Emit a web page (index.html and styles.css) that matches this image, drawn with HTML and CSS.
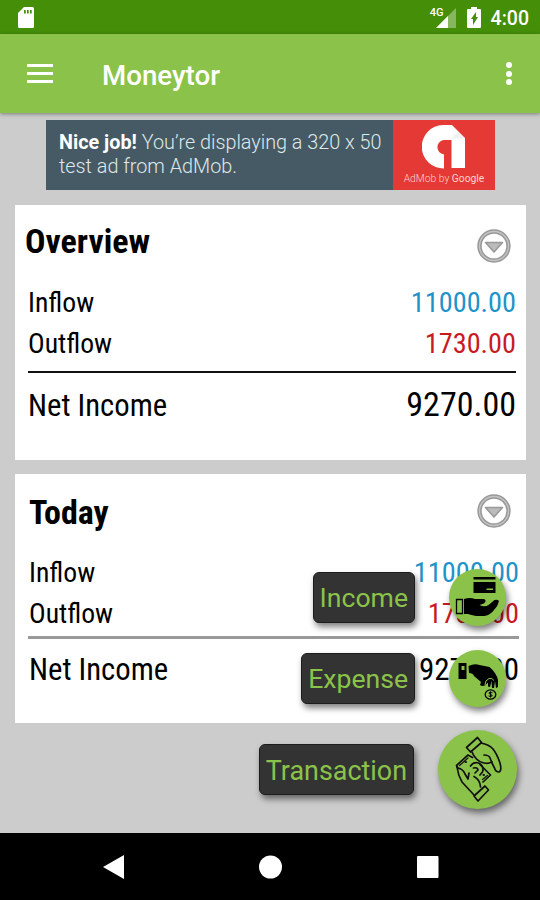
FILE: index.html
```html
<!DOCTYPE html>
<html lang="en">
<head>
  <meta charset="UTF-8">
  <meta name="viewport" content="width=device-width, initial-scale=1.0">
  <title>Moneytor</title>
  <link rel="stylesheet" href="styles.css">
</head>
<body>
  <div class="phone">
    <div class="status-bar">
      <svg class="sd-icon" width="16" height="21" viewBox="0 0 16 21">
        <path fill="#fff" d="M6 0h8.500a1.500 1.500 0 0 1 1.500 1.500v18a1.500 1.500 0 0 1-1.500 1.500h-13A1.500 1.500 0 0 1 0 19.500V6z"/>
        <path fill="#458f08" d="M6 3h1.700v3.500H6zM9 3h1.700v3.500H9zM12 3h1.700v3.500H12z"/>
      </svg>
      <div class="status-right">
        <span class="network">4G</span>
        <svg class="signal-icon" width="20" height="20" viewBox="0 0 20 20">
          <path fill="#fff" opacity=".35" d="M20 0v20H0z"/>
          <path fill="#fff" d="M12 8v12H0z"/>
        </svg>
        <svg class="battery-icon" width="14" height="21" viewBox="0 0 14 21">
          <path fill="#fff" d="M4 0h6v2h3a1 1 0 0 1 1 1v17a1 1 0 0 1-1 1H1a1 1 0 0 1-1-1V3a1 1 0 0 1 1-1h3z"/>
          <path fill="#458f08" d="M9 5v5h2l-5 8v-6H4z"/>
        </svg>
        <span class="clock">4:00</span>
      </div>
    </div>

    <div class="app-bar">
      <div class="menu-button"><span></span><span></span><span></span></div>
      <div class="app-title">Moneytor</div>
      <div class="more-button"><span></span><span></span><span></span></div>
    </div>

    <div class="content">
      <div class="ad">
        <div class="ad-text"><b>Nice job!</b> You’re displaying a 320 x 50<br>test ad from AdMob.</div>
        <div class="ad-logo">
          <svg width="44" height="44" viewBox="0 0 44 44">
            <path fill="#fff" d="M22 43.500A21.700 21.700 0 0 1 21 0H30L43 13V43H29.500V15H21.500A7.300 7.300 0 0 0 15.500 23Q16 28 22 29.500z"/>
            <path fill="#ddd" d="M29 13.500h14V13L36 7z" opacity=".4"/>
          </svg>
          <span class="ad-caption">AdMob by <b>Google</b></span>
        </div>
      </div>

      <div class="card overview">
        <div class="card-header">
          <div class="card-title"><span class="narrow">Overview</span></div>
          <svg class="expand-icon" width="34" height="34" viewBox="0 0 34 34">
            <circle cx="17" cy="17" r="14.500" fill="none" stroke="#999" stroke-width="4.400"/>
            <circle cx="17" cy="17" r="14.500" fill="none" stroke="#c4c4c4" stroke-width="1.300"/>
            <path d="M8.500 13.500h17L17 23z" fill="#bbb" stroke="#999" stroke-width="1.600" stroke-linejoin="round"/>
          </svg>
        </div>
        <div class="row"><span class="narrow">Inflow</span><span class="narrow inflow">11000.00</span></div>
        <div class="row"><span class="narrow">Outflow</span><span class="narrow outflow">1730.00</span></div>
        <div class="divider"></div>
        <div class="row total"><span class="narrow">Net Income</span><span class="narrow amount">9270.00</span></div>
      </div>

      <div class="card today">
        <div class="card-header">
          <div class="card-title"><span class="narrow">Today</span></div>
          <svg class="expand-icon" width="34" height="34" viewBox="0 0 34 34">
            <circle cx="17" cy="17" r="14.500" fill="none" stroke="#999" stroke-width="4.400"/>
            <circle cx="17" cy="17" r="14.500" fill="none" stroke="#c4c4c4" stroke-width="1.300"/>
            <path d="M8.500 13.500h17L17 23z" fill="#bbb" stroke="#999" stroke-width="1.600" stroke-linejoin="round"/>
          </svg>
        </div>
        <div class="row"><span class="narrow">Inflow</span><span class="narrow inflow">11000.00</span></div>
        <div class="row"><span class="narrow">Outflow</span><span class="narrow outflow">1730.00</span></div>
        <div class="divider"></div>
        <div class="row total"><span class="narrow">Net Income</span><span class="narrow amount">9270.00</span></div>
      </div>
    </div>

    <div class="fab-menu">
      <div class="fab-row">
        <span class="fab-label">Income</span>
        <div class="fab">
          <svg width="57" height="57" viewBox="0 0 57 57">
            <path d="M24.500 8h22v2.500h-22zM24.500 13h22v11h-22z"/>
            <path d="M37.500 19.500h6.500v1.500h-6.500z" fill="#8bc34a"/>
            <path d="M7.500 30.500h6v14h-6z" fill="none" stroke="#000" stroke-width="1.300"/>
            <path d="M15 30q6-2 11 0h9q2 .5 1.500 2.500t-6 3.500q5 2.500 9 0l6-5q3-1 4.500 1-1 5-5 9-4 5.500-10 6H27q-5-1-8-2h-4z"/>
          </svg>
        </div>
      </div>
      <div class="fab-row">
        <span class="fab-label">Expense</span>
        <div class="fab">
          <svg width="57" height="57" viewBox="0 0 57 57">
            <path d="M9.500 13h8v16h-8z"/>
            <path d="M12.500 16h3v4h-3z" fill="#8bc34a"/>
            <path d="M19.500 16q6-3 11-1l10 2q7 6 8.500 13v7l-2 1-1-7-1 7h-2l-.5-7-1.500 6-2-.5v-4l-3 3q-3 1-5-.5l1-3-7-6q-1-3-5-3z"/>
            <path d="M36 35q0-5 4-6.500 3-1 5 2" fill="none" stroke="#8bc34a" stroke-width="1"/>
            <ellipse cx="41.500" cy="44.500" rx="5.300" ry="4.600" fill="none" stroke="#000" stroke-width="1.300"/>
            <path d="M43.500 42.800q-2-1.300-3.500 0 0 1.200 1.500 1.500t1.700 1.600q-1.500 1.200-3.700 0M41.500 41.500v6" fill="none" stroke="#000" stroke-width="1"/>
          </svg>
        </div>
      </div>
      <div class="fab-row main">
        <span class="fab-label">Transaction</span>
        <div class="fab">
          <svg width="79" height="79" viewBox="0 0 79 79" fill="none" stroke="#111" stroke-width="1.700" stroke-linejoin="round" stroke-linecap="round">
            <path d="M28.500 17.500 39.500 7.500l4 5L32.500 22z"/>
            <path d="M43 13q8 1.500 12 6 4 5 7 14 2 8-1 9-3.500 0-4.500-4l-3-6q-3 2-7.500 1-5-1-7.500-4-3.500-4-4.500-7"/>
            <path d="M46 25q5 0 6 3t2 4"/>
            <path d="M20 38.500 18.500 35.500 30 25 34.500 27.500M42 34.500 52.500 45 45 52"/>
            <path d="M21.500 35.500 30 28M49.500 45.500 44.500 49.500" stroke-width="1.200"/>
            <path d="M32.500 36q3-4.500 8-3 6 3 4 9l-2.500 3M35.500 38q4-1 4.500 2l-3 3"/>
            <path d="M19 37q1 8 5 15l12 13M20 38q5 1 7 6l3 5 1-6M36 46.500q6 3 6.500 10.500"/>
            <path d="M36 66 47 56l3.500 4L40 71z"/>
            <path d="M27.500 32h.5M45.500 45h.5" stroke-width="2"/>
          </svg>
        </div>
      </div>
    </div>

    <div class="nav-bar">
      <svg width="24" height="26" viewBox="0 0 24 26"><path fill="#fff" d="M22 1v24L1 13z"/></svg>
      <svg width="24" height="26" viewBox="0 0 24 26"><circle cx="11.500" cy="13" r="11.500" fill="#fff"/></svg>
      <svg width="24" height="26" viewBox="0 0 24 26"><rect x="1" y="2" width="21.500" height="22" rx="1" fill="#fff"/></svg>
    </div>
  </div>
</body>
</html>
```
FILE: styles.css
```css
* {
  box-sizing: border-box;
}
body {
  margin: 0;
  font-family: Roboto, sans-serif;
  background-color: #ccc;
  color: #000;
}
svg {
  display: block;
  flex: none;
}
.phone {
  position: relative;
  width: 540px;
  height: 900px;
  display: flex;
  flex-direction: column;
  overflow: hidden;
}
.status-bar {
  height: 34px;
  flex: none;
  display: flex;
  justify-content: space-between;
  padding: 7px 11px 0 18px;
  background-color: #458f08;
  color: #fff;
}
.status-right {
  display: flex;
}
.network {
  font-size: 11px;
  line-height: 11px;
  font-weight: 500;
  margin-right: -8px;
}
.signal-icon {
  margin-top: 1px;
}
.battery-icon {
  margin: 0 10px 0 11px;
}
.clock {
  font-size: 19.500px;
  line-height: 23px;
  font-weight: 500;
}
.app-bar {
  height: 79px;
  flex: none;
  display: flex;
  align-items: center;
  padding: 0 28px 0 27px;
  background-color: #8bc34a;
  color: #fff;
  box-shadow: 0 1px 4px rgba(0, 0, 0, 0.4);
  z-index: 1;
}
.menu-button {
  width: 26px;
  display: grid;
  gap: 5px;
}
.menu-button span {
  height: 3px;
  background-color: #fff;
}
.app-title {
  flex: 1;
  margin: 4px 0 0 49px;
  font-size: 27.700px;
  line-height: 32px;
  font-weight: 500;
}
.more-button {
  display: grid;
  gap: 2.500px;
}
.more-button span {
  width: 6px;
  height: 6px;
  border-radius: 50%;
  background-color: #fff;
}
.content {
  flex: 1;
  padding: 7px 14px 0 15px;
}
.ad {
  width: 449px;
  height: 70px;
  margin: 0 auto 15px 31px;
  display: flex;
  background-color: #455a64;
}
.ad-text {
  width: 347px;
  padding: 11px 0 0 13px;
  font-size: 19.800px;
  line-height: 24px;
  font-weight: 300;
  color: #dfe8ec;
  white-space: nowrap;
}
.ad-text b {
  color: #fff;
  font-weight: 700;
}
.ad-logo {
  flex: 1;
  display: flex;
  flex-direction: column;
  align-items: center;
  padding-top: 5px;
  background-color: #e53935;
}
.ad-caption {
  margin-top: 4px;
  font-size: 10.300px;
  line-height: 12px;
  font-weight: 300;
  color: #fbd3d0;
}
.ad-caption b {
  font-weight: 400;
}
.card {
  background-color: #fff;
  padding: 19px 10px 0 13px;
}
.overview {
  height: 255px;
  margin-bottom: 14px;
}
.today {
  height: 249px;
  padding: 21px 7px 0 14px;
}
.card-header {
  height: 61px;
  display: flex;
  justify-content: space-between;
}
.today .card-header {
  height: 60px;
}
.card-title {
  font-size: 34px;
  line-height: 35px;
  font-weight: 700;
}
.narrow {
  font-family: "Roboto Condensed", Roboto, sans-serif;
  font-stretch: 75%;
}
.overview .card-title {
  margin-left: -3px;
}
.expand-icon {
  margin: 5px 5px 0 0;
}
.today .expand-icon {
  margin: -1px 8px 0 0;
}
.row {
  height: 41px;
  display: flex;
  justify-content: space-between;
  font-size: 27.700px;
  line-height: 35px;
}
.inflow,
.outflow {
  font-size: 28.300px;
}
.inflow {
  color: #1f93c9;
}
.outflow {
  color: #c91a1f;
}
.divider {
  height: 2px;
  margin-top: 4px;
  background-color: #111;
}
.today .divider {
  height: 3px;
  margin: -1px 0 0 -1px;
  background-color: #999;
}
.total {
  font-size: 30.700px;
  line-height: 65px;
}
.today .total {
  line-height: 61px;
}
.amount {
  font-size: 34px;
  line-height: 63px;
}
.today .amount {
  font-size: 31px;
  line-height: 61px;
}
.fab-menu {
  position: absolute;
  right: 23px;
  top: 569px;
  display: grid;
  gap: 24px;
  z-index: 2;
}
.fab-row {
  display: flex;
  justify-content: flex-end;
  align-items: center;
  gap: 34px;
  padding-right: 11px;
}
.fab-row.main {
  gap: 24px;
  margin-top: -1px;
  padding-right: 0;
}
.fab-label {
  height: 51px;
  padding: 0 6px;
  font-size: 26.600px;
  line-height: 49px;
  color: #8bc34a;
  background-color: #333;
  border: 1px solid #1c1c1c;
  border-radius: 6px;
  box-shadow: 2px 4px 6px rgba(0, 0, 0, 0.5);
}
.main .fab-label {
  font-size: 26.900px;
  line-height: 53px;
}
.fab {
  border-radius: 50%;
  background-color: #8bc34a;
  box-shadow: 2px 4px 6px rgba(0, 0, 0, 0.5);
}
.nav-bar {
  height: 67px;
  flex: none;
  display: flex;
  justify-content: space-between;
  align-items: center;
  padding: 0 100px 0 102px;
  background-color: #000;
}
```
